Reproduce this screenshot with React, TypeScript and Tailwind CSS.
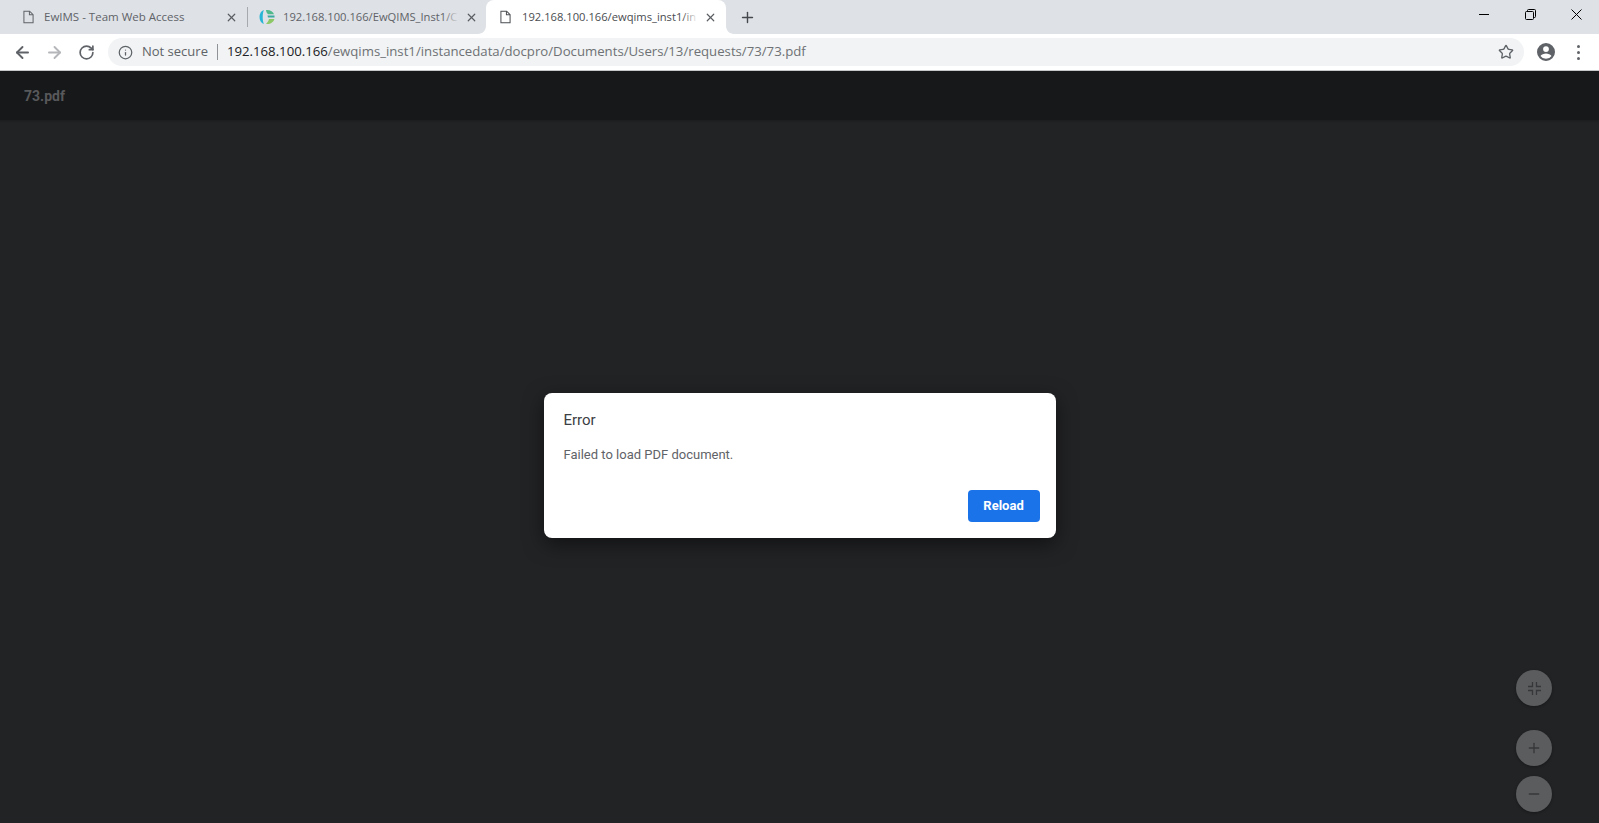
import React from "react";
import { ArrowLeft, ArrowRight, RotateCw, Info, Star, Plus, Minus, X } from "lucide-react";

function PageIcon({ className }: { className?: string }) {
  return (
    <svg viewBox="0 0 12 14" className={className} fill="none" stroke="currentColor" strokeWidth="1.1">
      <path d="M1 .6h6.2L11 4.4v9H1z" />
      <path d="M7 .6v4h4" />
    </svg>
  );
}

function Favicon() {
  return (
    <svg viewBox="0 0 16 16" className="w-4 h-4 shrink-0">
      <path d="M5 1C1.800 2 .5 5 .5 8s1.300 6 4.500 7C3.300 12 3.300 4 5 1z" fill="#29b6d6" />
      <path d="M7 1c3.500-.6 7 1.200 8 4.200H9C7.800 4 7 2.500 7 1z" fill="#4fb98c" />
      <path d="M8.500 6.500h7v2h-6.500z" fill="#3aa9a0" />
      <path d="M10 10h5.400c-.8 3-3.700 5.400-8.400 5 1.500-1.500 2.500-3 3-5z" fill="#8cc866" />
    </svg>
  );
}

function Tab({ title, fade, icon, active, pad = "pl-[13px] pr-[12px]", gap = "ml-[10px]", size = "text-[11.5px]" }: { title: string; fade: string; icon: React.ReactNode; active?: boolean; pad?: string; gap?: string; size?: string }) {
  return (
    <div className={`relative flex items-center w-[240px] h-[34px] shrink-0 ${pad} ${active ? "bg-white rounded-t-lg" : ""}`}>
      {icon}
      <span className={`relative ${gap} flex-1 overflow-hidden whitespace-nowrap ${size} ${active ? "text-[#4a4d51]" : "text-[#5f6368]"}`}>
        {title}
        <span className={`absolute right-0 top-0 bottom-0 w-4 bg-gradient-to-r from-transparent ${fade}`} />
      </span>
      <X size={13} strokeWidth={2.2} className="ml-[6px] shrink-0 text-[#5a5d61]" />
      {active && (
        <>
          <svg viewBox="0 0 8 8" className="absolute -left-2 bottom-0 w-2 h-2 text-white" fill="currentColor"><path d="M8 0v8H0c4.400 0 8-3.600 8-8z" /></svg>
          <svg viewBox="0 0 8 8" className="absolute -right-2 bottom-0 w-2 h-2 text-white" fill="currentColor"><path d="M0 0v8h8C3.600 8 0 4.400 0 0z" /></svg>
        </>
      )}
    </div>
  );
}

function Fab({ children }: { children: React.ReactNode }) {
  return (
    <button className="flex items-center justify-center w-9 h-9 rounded-full bg-[#5b5c5d] text-[#36373a] shadow-[0_1px_3px_rgba(0,0,0,0.3)]">
      {children}
    </button>
  );
}

export default function App() {
  return (
    <div className="relative flex flex-col h-[823px] overflow-hidden bg-[#222325] font-['Open_Sans',sans-serif]">
      {/* tab strip */}
      <div className="flex h-[34px] shrink-0 bg-[#dee1e6]">
        <div className="flex pl-[10px]">
          <Tab title="EwIMS - Team Web Access" fade="to-transparent" icon={<PageIcon className="w-[11px] h-[14px] shrink-0 text-[#5f6368]" />} />
          <div className="w-px h-[20px] mt-[7px] bg-[#a6a9ad] -ml-[3px] mr-[-2px]" />
          <Tab title="192.168.100.166/EwQIMS_Inst1/C" fade="to-[#dee1e6]" gap="ml-[8px]" pad="pl-[13px] pr-[8px]" size="text-[11.2px]" icon={<Favicon />} />
          <Tab title="192.168.100.166/ewqims_inst1/in" fade="to-white" pad="pl-[14px] pr-[9px]" gap="ml-[11px]" size="text-[11.2px]" active icon={<PageIcon className="w-[11px] h-[14px] shrink-0 text-[#4a4d51]" />} />
        </div>
        <Plus size={17} strokeWidth={2} className="ml-[13px] mt-[9px] text-[#45484c]" />
        <div className="ml-auto flex items-start text-black">
          <div className="w-[46px] h-[28px] flex items-center justify-center">
            <div className="w-[10px] h-px bg-black" />
          </div>
          <div className="w-[46px] h-[28px] flex items-center justify-center">
            <svg viewBox="0 0 11 11" className="w-[11px] h-[11px]" fill="none" stroke="currentColor"><rect x=".5" y="2.500" width="8" height="8" rx="1" /><path d="M2.500 2.500V1.500a1 1 0 0 1 1-1h6a1 1 0 0 1 1 1v6a1 1 0 0 1-1 1h-1" /></svg>
          </div>
          <div className="w-[46px] h-[28px] flex items-center justify-center">
            <svg viewBox="0 0 11 11" className="w-[11px] h-[11px]" fill="none" stroke="currentColor"><path d="M.5.500l10 10M10.500.500l-10 10" /></svg>
          </div>
        </div>
      </div>

      {/* toolbar */}
      <div className="flex items-center h-[37px] shrink-0 bg-white border-b border-[#c8cacc] pl-[13px] pr-[19px]">
        <ArrowLeft size={19} strokeWidth={2.4} className="text-[#5f6368]" />
        <ArrowRight size={19} strokeWidth={2.4} className="ml-[13px] text-[#b4b6b9]" />
        <RotateCw size={17} strokeWidth={2.4} className="ml-[14px] text-[#5f6368]" />
        <div className="flex flex-1 items-center h-[28px] ml-[13px] pl-[10px] pr-[10px] rounded-full bg-[#f1f3f4]">
          <Info size={15} strokeWidth={2} className="text-[#5f6368]" />
          <span className="ml-[9px] text-[13px] text-[#5f6368]">Not secure</span>
          <div className="w-px h-[16px] ml-[9px] mr-[9px] bg-[#8f9296]" />
          <span className="text-[13.2px] whitespace-nowrap text-[#6e7175]">
            <span className="text-[#202124]">192.168.100.166</span>/ewqims_inst1/instancedata/docpro/Documents/Users/13/requests/73/73.pdf
          </span>
          <Star size={16} strokeWidth={2} className="ml-auto text-[#5f6368]" />
        </div>
        <svg viewBox="0 0 18 18" className="ml-[13px] w-[18px] h-[18px] text-[#5f6368]" fill="currentColor">
          <path fillRule="evenodd" d="M9 0a9 9 0 1 0 0 18A9 9 0 0 0 9 0zm0 3.200a2.900 2.900 0 1 1 0 5.800 2.900 2.900 0 0 1 0-5.800zM9 15.800a6.800 6.800 0 0 1-5.500-2.900c.6-1.500 3.700-2.400 5.500-2.400s4.900.9 5.500 2.400A6.800 6.800 0 0 1 9 15.800z" />
        </svg>
        <div className="ml-[22px] flex flex-col gap-[3px]">
          <div className="w-[3px] h-[3px] rounded-full bg-[#5f6368]" />
          <div className="w-[3px] h-[3px] rounded-full bg-[#5f6368]" />
          <div className="w-[3px] h-[3px] rounded-full bg-[#5f6368]" />
        </div>
      </div>

      {/* pdf viewer header */}
      <div className="flex items-center h-[49px] pt-[2px] shrink-0 pl-[24px] bg-[#17181a] shadow-[0_1px_2px_rgba(0,0,0,0.2)] font-['Roboto',sans-serif]">
        <span className="text-[14px] font-bold text-[#58595b]">73.pdf</span>
      </div>

      {/* error dialog */}
      <div className="flex flex-1 justify-center pt-[273px] font-['Roboto',sans-serif]">
        <div className="flex flex-col w-[512px] h-[145px] rounded-lg bg-white shadow-[0_6px_20px_rgba(0,0,0,0.5)]">
          <div className="px-5 pt-[17px] text-[15px] leading-5 text-[#3c4043]">Error</div>
          <div className="px-5 pt-[16px] text-[13px] leading-[18px] text-[#5f6368]">Failed to load PDF document.</div>
          <div className="flex justify-end mt-auto pr-4 pb-[16px]">
            <button className="w-[72px] h-[32px] rounded bg-[#1a73e8] text-[13px] font-bold text-white">Reload</button>
          </div>
        </div>
      </div>

      {/* zoom controls */}
      <div className="absolute left-[1516px] top-[670px] flex flex-col">
        <Fab>
          <svg viewBox="0 0 13 13" className="w-[13px] h-[13px]" fill="none" stroke="currentColor" strokeWidth="1.300">
            <path d="M4.500 0v4.500H0M8.500 0v4.500H13M4.500 13V8.500H0M8.500 13V8.500H13" />
          </svg>
        </Fab>
        <div className="h-6" />
        <Fab><Plus size={16} strokeWidth={2} /></Fab>
        <div className="h-2.5" />
        <Fab><Minus size={16} strokeWidth={2} /></Fab>
      </div>
    </div>
  );
}
